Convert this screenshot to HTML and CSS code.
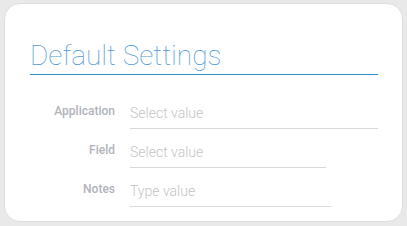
FILE: index.html
```html
<!DOCTYPE html>
<html lang="en">
<head>
    <meta charset="UTF-8">
    <title>Default Settings</title>
    <link rel="stylesheet" href="styles.css">
</head>
<body>
    <div class="card">
        <h1 class="card-title">Default Settings</h1>
        <div class="title-rule"></div>
        <div class="form">
            <div class="form-row">
                <label class="form-label">Application</label>
                <div class="form-field field-full">Select value</div>
            </div>
            <div class="form-row">
                <label class="form-label">Field</label>
                <div class="form-field field-mid">Select value</div>
            </div>
            <div class="form-row">
                <label class="form-label">Notes</label>
                <div class="form-field field-wide">Type value</div>
            </div>
        </div>
    </div>
</body>
</html>
```

FILE: styles.css
```css
body {
    margin: 0;
    padding: 3px 4px 4px 4px;
    background-color: #e9e9e9;
    font-family: Roboto, "Liberation Sans", sans-serif;
}
.card {
    height: 217px;
    background-color: #fff;
    border: 1px solid #dedede;
    border-radius: 16px;
    padding: 0 24px 0 25px;
}
.card-title {
    margin: 0;
    padding-top: 34px;
    height: 36px;
    font-size: 28px;
    font-weight: 100;
    line-height: 36px;
    color: #4f9ad4;
}
.title-rule {
    height: 1px;
    background-color: #2b8dc0;
}
.form {
    padding-top: 15px;
}
.form-row {
    display: flex;
    align-items: flex-start;
    height: 39px;
}
.form-label {
    width: 85px;
    padding-top: 13px;
    text-align: right;
    font-size: 12px;
    font-weight: 500;
    line-height: 16px;
    color: #b0b3ba;
}
.form-field {
    box-sizing: border-box;
    height: 39px;
    margin-left: 15px;
    padding-top: 13px;
    font-size: 14px;
    font-weight: 300;
    line-height: 20px;
    color: #c4c4c4;
    border-bottom: 1px solid #d9d9d9;
}
.field-full { flex: 1; }
.field-mid { width: 196px; }
.field-wide { width: 201px; }
```
